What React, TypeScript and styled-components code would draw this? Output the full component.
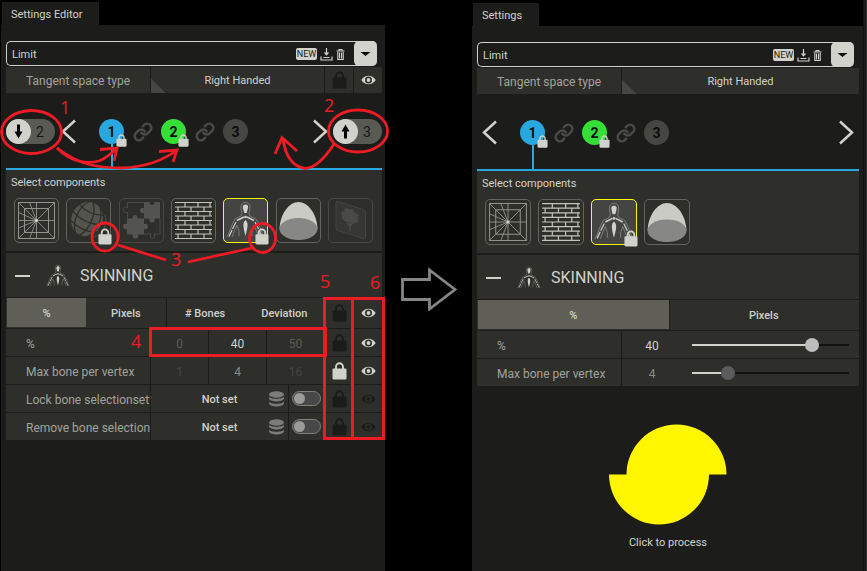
import React, { useId, useState } from "react";
import styled, { createGlobalStyle, css } from "styled-components";
import { Link as LinkIcon } from "lucide-react";

const color = {
  black: "#000000",
  panel: "#1c1c1a",
  cell: "#2e2e2a",
  active: "#5f5f58",
  light: "#d2d2cc",
  label: "#a3a39d",
  blue: "#29a8df",
  green: "#35df38",
  yellow: "#fff600",
  red: "#ed1c24",
};

const GlobalStyle = createGlobalStyle`
  *, *::before, *::after { box-sizing: border-box; }
  body { margin: 0; background: ${color.black}; }
  button, input, select { font: inherit; color: inherit; margin: 0; padding: 0; border: 0; background: none; border-radius: 0; min-width: 0; }
  svg { display: block; }
`;

const Page = styled.main`
  position: relative;
  display: flex;
  min-height: 100vh;
  padding-left: 1px;
  background: ${color.black};
  color: ${color.light};
  font: 12px/16px Roboto, sans-serif;
`;

const Window = styled.section<{ $grow: number; $top: number }>`
  flex: ${(p) => p.$grow} 1 0;
  min-width: 0;
  display: flex;
  flex-direction: column;
  padding-top: ${(p) => p.$top}px;
`;

const WindowTab = styled.h1`
  align-self: flex-start;
  margin: 0 0 0 1px;
  padding: 0 17px 0 9px;
  height: 23px;
  background: ${color.panel};
  font-size: 11px;
  font-weight: 400;
  line-height: 25px;
`;

const WindowBody = styled.div<{ $end: number }>`
  flex: 1;
  padding: 16px ${(p) => p.$end}px 0 5px;
  background: ${color.panel};
`;

const Between = styled.div`
  flex: 0 0 87px;
  display: flex;
  justify-content: center;
  padding-top: 267px;
`;

const WindowEdge = styled.div`
  flex: 0 0 4px;
  border-left: 1px solid #111;
  border-right: 1px solid #333;
  background: #1a1a1a;
`;

const Combo = styled.div`
  display: flex;
  align-items: center;
  height: 25px;
  margin: 0 5px 1px 0;
  padding-left: 5px;
  border: 1px solid ${color.light};
  border-right: 0;
  border-radius: 5px;
`;

const ComboSelect = styled.select`
  flex: 1;
  appearance: none;
  padding-top: 2px;
  font-size: 11px;
`;

const IconButton = styled.button`
  flex: none;
  display: grid;
  place-items: center;
  cursor: pointer;
`;

const NewButton = styled.button`
  width: 21px;
  height: 12px;
  margin: 1px 3px 0 0;
  border-radius: 2px;
  background: ${color.light};
  color: ${color.panel};
  font-size: 9px;
  line-height: 13px;
`;

const ToolButton = styled(IconButton)`
  margin-top: 1px;
`;

const DropButton = styled(IconButton)`
  width: 23px;
  height: 25px;
  margin-left: 6px;
  border-radius: 5px;
  background: ${color.light};
`;

const Row = styled.div<{ $columns: string; $height?: number }>`
  display: grid;
  grid-template-columns: ${(p) => p.$columns};
  gap: 1px;
  height: ${(p) => p.$height ?? 27}px;
  margin-bottom: 1px;
`;

const Cell = styled.div`
  min-width: 0;
  display: flex;
  align-items: center;
  justify-content: center;
  background: ${color.cell};
`;

const RowLabel = styled.label`
  min-width: 0;
  display: flex;
  align-items: center;
  padding: 2px 0 0 20px;
  overflow: hidden;
  white-space: nowrap;
  background: ${color.cell};
  color: ${color.label};
`;

const CenteredSelect = styled.select`
  width: 100%;
  height: 100%;
  padding-top: 2px;
  appearance: none;
  font-size: 11px;
  text-align-last: center;
`;

const CornerCell = styled(Cell)`
  background: linear-gradient(45deg, #464642 10px, transparent 10px) ${color.cell};
`;

const NumberInput = styled.input<{ $tone: string }>`
  width: 100%;
  padding-top: 2px;
  text-align: center;
  color: ${(p) => p.$tone};
`;

const Timeline = styled.div<{ $pills?: boolean }>`
  display: flex;
  align-items: flex-start;
  height: 76px;
  padding: ${(p) => (p.$pills ? "25px 0 0" : "25px 5px 0")};
  border-bottom: 2px solid ${color.blue};
`;

const Pill = styled.button`
  display: flex;
  align-items: center;
  width: 49px;
  height: 25px;
  border-radius: 13px;
  background: #5a5a54;
  color: #161614;
  font-size: 14px;
`;

const PillKnob = styled.span`
  display: grid;
  place-items: center;
  width: 25px;
  height: 25px;
  margin-right: 5px;
  border-radius: 50%;
  background: ${color.light};
`;

const ArrowButton = styled(IconButton)<{ $before?: number; $after?: number }>`
  height: 25px;
  margin: 0 ${(p) => p.$after ?? 0}px 0 ${(p) => p.$before ?? 0}px;
`;

const Steps = styled.ol`
  flex: 1;
  display: flex;
  align-items: flex-start;
  margin: 0;
  padding: 0;
  list-style: none;
`;

const Step = styled.li<{ $tone: string; $stem?: boolean }>`
  position: relative;
  & > button {
    display: block;
    width: 25px;
    height: 25px;
    border-radius: 50%;
    background: ${(p) => p.$tone};
    color: #0c0c0b;
    font-size: 14px;
    font-weight: 700;
  }
  ${(p) =>
    p.$stem &&
    css`
      &::after {
        content: "";
        display: block;
        width: 2px;
        height: 25px;
        margin-left: 12px;
        background: ${color.blue};
      }
    `}
`;

const StepLink = styled.li`
  display: grid;
  place-items: center;
  width: 37px;
  height: 25px;
  color: #4a4a47;
`;

const Badge = styled.span<{ $right: number; $bottom?: number; $top?: number }>`
  position: absolute;
  right: ${(p) => p.$right}px;
  ${(p) => (p.$top !== undefined ? `top: ${p.$top}px;` : `bottom: ${p.$bottom}px;`)}
  pointer-events: none;
`;

const Components = styled.section`
  margin-bottom: 2px;
  padding: 5px 9px 8px 8px;
  background: ${color.cell};
`;

const SmallTitle = styled.h2`
  margin: 0 0 7px -3px;
  font-size: 11px;
  font-weight: 400;
  line-height: 16px;
`;

const Tiles = styled.div<{ $spread?: boolean }>`
  display: flex;
  gap: 7px;
  justify-content: ${(p) => (p.$spread ? "space-between" : "flex-start")};
`;

const Tile = styled.button<{ $size: number; $on?: boolean; $dim?: boolean }>`
  position: relative;
  display: block;
  width: ${(p) => p.$size}px;
  height: ${(p) => p.$size}px;
  border: 1px solid ${(p) => (p.$on ? color.yellow : p.$dim ? "#484844" : "#64645f")};
  border-radius: 5px;
  background: ${(p) => (p.$on ? "#444442" : "transparent")};
`;

const SectionHead = styled.button`
  display: flex;
  align-items: center;
  width: 100%;
  height: 44px;
  margin-bottom: 1px;
  padding: 1px 0 0 9px;
  background: ${color.cell};
  font-size: 16px;
  line-height: 20px;
`;

const Minus = styled.span`
  width: 15px;
  height: 2px;
  margin-right: 15px;
  background: ${color.light};
`;

const HeadIcon = styled.span`
  margin-right: 9px;
`;

const TabStrip = styled.div`
  display: grid;
  grid-auto-flow: column;
  grid-auto-columns: 1fr;
  padding: 0 0 1px 1px;
  background: ${color.cell};
  font-size: 11px;
`;

const TabButton = styled.button<{ $line?: boolean }>`
  padding-top: 2px;
  background: ${color.cell};
  box-shadow: ${(p) => (p.$line ? `inset 1px 0 ${color.panel}` : "none")};
  font-weight: 500;
  &[aria-selected="true"] { background: ${color.active}; box-shadow: none; }
`;

const ValueCell = styled(Cell)`
  display: grid;
  grid-template-columns: 1fr auto 1fr;
  & > svg { grid-column: 3; justify-self: end; margin-right: 4px; }
  & > button { grid-column: 2; padding-top: 2px; font-size: 11px; font-weight: 500; }
`;

const Switch = styled.input`
  appearance: none;
  display: flex;
  align-items: center;
  width: 29px;
  height: 15px;
  border: 1px solid #80807d;
  border-radius: 8px;
  background: #484848;
  &::before {
    content: "";
    width: 11px;
    height: 11px;
    margin-left: 1px;
    border-radius: 50%;
    background: #9b9b98;
  }
  &:checked { justify-content: flex-end; }
`;

const SliderCell = styled(Cell)`
  padding-right: 10px;
  & > input[type="text"] { flex: 0 0 60px; width: 60px; margin-right: 10px; }
`;

const Slider = styled.input<{ $fill: number; $thumb: string }>`
  appearance: none;
  flex: 1;
  height: 14px;
  background: linear-gradient(90deg, ${color.light} ${(p) => p.$fill}%, #11110f ${(p) => p.$fill}%)
    center / 100% 2px no-repeat;
  &::-webkit-slider-thumb {
    appearance: none;
    width: 14px;
    height: 14px;
    border-radius: 50%;
    background: ${(p) => p.$thumb};
  }
`;

const Process = styled.button`
  display: flex;
  flex-direction: column;
  align-items: center;
  gap: 10px;
  margin: 38px auto 0;
  font-size: 11px;
`;

const Overlay = styled.svg`
  position: absolute;
  top: 0;
  left: 0;
  pointer-events: none;
  font-family: "Open Sans", sans-serif;
`;

function Lock({ width = 15, fill = color.light }: { width?: number; fill?: string }) {
  return (
    <svg width={width} height={Math.round(width * 1.2)} viewBox="0 0 15 18" aria-hidden="true">
      <path d="M4 8V4.8a3.4 3.4 0 0 1 7 0V8" fill="none" stroke={fill} strokeWidth="1.9" />
      <path d="M1.5 6.5h12q1 0 1 1V16q0 1.500-1.500 1.500H2Q.5 17.500.5 16V7.500q0-1 1-1Z" fill={fill} />
    </svg>
  );
}

function Eye({ fill = color.light }: { fill?: string }) {
  return (
    <svg width="15" height="10" viewBox="0 0 15 10" aria-hidden="true">
      <path d="M.3 5C2.300 2 4.800.7 7.500.7S12.700 2 14.700 5C12.700 8 10.200 9.300 7.500 9.300S2.300 8 .3 5Z" fill={fill} />
      <circle cx="7.5" cy="5" r="2.700" fill={fill} stroke={color.cell} strokeWidth="1.600" />
    </svg>
  );
}

function LockCell({ on }: { on?: boolean }) {
  return (
    <Cell>
      <IconButton aria-label="Lock" aria-pressed={!!on}>
        <Lock fill={on ? color.light : "#1b1b19"} />
      </IconButton>
    </Cell>
  );
}

function EyeCell({ off }: { off?: boolean }) {
  return (
    <Cell>
      <IconButton aria-label="Visible" aria-pressed={!off}>
        <Eye fill={off ? "#1b1b19" : color.light} />
      </IconButton>
    </Cell>
  );
}

function Chevron({ flip }: { flip?: boolean }) {
  return (
    <svg width="15" height="25" viewBox="0 0 15 25" aria-hidden="true">
      <path d={flip ? "M1 1.500 13 12.500 1 23.500" : "M14 1.500 2 12.500 14 23.500"} fill="none" stroke={color.light} strokeWidth="2.500" />
    </svg>
  );
}

function PillArrow({ up }: { up?: boolean }) {
  return (
    <svg width="9" height="15" viewBox="0 0 9 15" aria-hidden="true">
      <path d={up ? "M4.500.500 8.500 7.500H6V14.500H3V7.500H.5Z" : "M4.500 14.500 8.500 7.500H6V.500H3V7.500H.5Z"} fill="#050505" />
    </svg>
  );
}

function Disks() {
  return (
    <svg width="15" height="16" viewBox="0 0 15 16" fill="#7b7b78" aria-hidden="true">
      <ellipse cx="7.500" cy="3.500" rx="7.500" ry="3.200" />
      <path d="M0 5.500c1 3 14 3 15 0v2c-1 4-14 4-15 0Z" />
      <path d="M0 10.500c1 3 14 3 15 0v1.700c-1 4.300-14 4.300-15 0Z" />
    </svg>
  );
}

function WebDrawing() {
  return (
    <g fill="none" stroke="#92928d" strokeWidth="1">
      <path d="M4.500 4.500h36v36h-36ZM10.500 10.500h24v24h-24Z" />
      <path d="M22.500 4.500v36M4.500 22.500h36M4.500 4.500l36 36M40.500 4.500l-36 36" strokeWidth=".9" />
      <path d="M22.500 22.500 15.500 4.500M22.500 22.500 4.500 14.500M22.500 22.500 4.500 30M22.500 22.500 15.500 40.500" strokeWidth=".9" />
      <circle cx="22.500" cy="22.500" r="1.500" fill={color.light} stroke="none" />
    </g>
  );
}

function GlobeDrawing() {
  return (
    <g>
      <path d="M39 17c3 8-2 20-12 22" fill="none" stroke="#4b4b47" />
      <g transform="rotate(25 21 21)">
        <ellipse cx="21" cy="21" rx="15.500" ry="17.500" fill="#54544f" />
        <g fill="none" stroke={color.cell} strokeWidth="1.300">
          <path d="M17 3c-9 9-9 27 0 36M19 3c9 9 9 27 2 36M28 5c8 9 7 24 1 32" />
          <path d="M8 11q13 6 26 0M5 20q16 7 32 0M7 29q14 6 28 0" />
        </g>
      </g>
    </g>
  );
}

function PuzzleDrawing() {
  return (
    <g strokeWidth="1">
      <path
        fill="none"
        stroke="#494945"
        d="M8.500 4.500H25M8.500 4.500V10q-4-2-4 2t4 2v6.500M41 20.500v15.500h-6q2 4.500-1.500 4.500T32 36h-7"
      />
      <path
        fill="#53534f"
        d="M25 4h5.500q-.5 3 2.500 3t2.500-3H41v16.500h-5.500q1 4-2.500 4t-2.500-4H25V15q-4 1-4-2.500T25 10Z"
      />
      <path
        fill="#53534f"
        d="M8 20.500h5.500q-.5-3.500 2.500-3.500t2.500 3.500H25V26q4-1 4 2.500T25 31v5.500h-6q1 4-2.500 4t-2.500-4H8V31q-4 1-4-2.500T8 26Z"
      />
    </g>
  );
}

function BricksDrawing() {
  const courses = [0, 1, 2, 3, 4, 5, 6, 7];
  return (
    <g stroke="#c4c4be" strokeWidth="1.200" fill="none">
      {courses.map((course) => {
        const top = 4.5 + course * 4.5;
        const joints = course % 2 ? [7, 20, 33] : [14, 27, 39];
        return (
          <React.Fragment key={course}>
            <path d={`M4 ${top}H41`} />
            {joints.map((x) => (
              <path key={x} d={`M${x} ${top}V${top + 4.5}`} />
            ))}
          </React.Fragment>
        );
      })}
      <path d="M4 40.500H41" />
    </g>
  );
}

function FigureDrawing() {
  return (
    <g fill="none" stroke="#898985" strokeWidth=".8">
      <path d="M19 15.500C17 8 18 4.500 22.500 4.500S28 8 26 15.500L27 18l6 3c3 5 5 12 8 18M19 15.500 18 18l-6 3C9 26 7 33 4 39" />
      <path d="M14 27c-2 4-3 8-5 12M31 27c2 4 3 8 5 12M14 27l2 6v5M31 27l-2 6v5" />
      <path d="M22.500 6.500c-4 0-2.500 4-1.200 8.500h2.400c1.300-4.500 2.800-8.500-1.200-8.500Z" fill={color.light} stroke="none" />
      <path d="M22.500 22c-3.500 3-2 8 0 16 2-8 3.500-13 0-16Z" fill={color.light} stroke="none" />
      <path d="M21 19 14 22.500M24 19l7 3.500" stroke={color.light} strokeWidth="1.500" />
      <path d="M13 24 9.500 31M32 24l3.500 7M9 32 6 38.500M36 32l3 6.500" stroke={color.light} strokeWidth="1.200" />
      <circle cx="22.500" cy="19" r="1.300" fill={color.light} stroke="none" />
    </g>
  );
}

function DomeDrawing() {
  return (
    <g>
      <path d="M3.500 31C4 16 13 4 22.500 4S41 16 41.500 31Z" fill="#cbcbc5" />
      <ellipse cx="22.500" cy="31" rx="19" ry="11" fill="#878785" />
    </g>
  );
}

function TreeDrawing() {
  return (
    <g>
      <path d="M8 4.500Q8 3 10 3.500L35 11.500Q37.500 12.500 37.500 15V39Q37.500 41.500 35 40.500L10 32.500Q8 32 8 30Z" fill="#363633" stroke="#454542" />
      <path d="M14 18q-2-4 2-5 0-4 5-2 4-1 5 3 6 2 4 6 2 5-3 5-4 2-6-1-5 0-5-2-3-1-2-4Z" fill="#4a4a47" />
      <path d="M22 23v10M22 28l-3-3M22 28l3-3" stroke="#4a4a47" strokeWidth="1.500" fill="none" />
    </g>
  );
}

const drawings = {
  web: WebDrawing,
  globe: GlobeDrawing,
  puzzle: PuzzleDrawing,
  bricks: BricksDrawing,
  figure: FigureDrawing,
  dome: DomeDrawing,
  tree: TreeDrawing,
};
type DrawingName = keyof typeof drawings;

function Drawing({ name, size }: { name: DrawingName; size: number }) {
  const Shape = drawings[name];
  return (
    <svg width={size} height={size} viewBox="1 1 43 43" aria-hidden="true">
      <Shape />
    </svg>
  );
}

interface TileData {
  name: DrawingName;
  on?: boolean;
  dim?: boolean;
  locked?: boolean;
}

function ComponentPicker({ tiles, size, spread }: { tiles: TileData[]; size: number; spread?: boolean }) {
  return (
    <Components>
      <SmallTitle>Select components</SmallTitle>
      <Tiles $spread={spread}>
        {tiles.map((t) => (
          <Tile key={t.name} $size={size} $on={t.on} $dim={t.dim} aria-label={t.name} aria-pressed={!!t.on}>
            <Drawing name={t.name} size={size - 2} />
            {t.locked && (
              <Badge $right={-2} $bottom={-3}>
                <Lock width={14} />
              </Badge>
            )}
          </Tile>
        ))}
      </Tiles>
    </Components>
  );
}

function PresetBar() {
  return (
    <Combo>
      <ComboSelect aria-label="Preset">
        <option>Limit</option>
      </ComboSelect>
      <NewButton>NEW</NewButton>
      <ToolButton aria-label="Save preset">
        <svg width="13" height="13" viewBox="0 0 13 13" aria-hidden="true">
          <path d="M6.500 0v7M1 8.500V12h11V8.500M3.500 9.500h6" fill="none" stroke={color.light} strokeWidth="1.200" />
          <path d="M3.800 4.500 6.500 7.800 9.200 4.500Z" fill={color.light} />
        </svg>
      </ToolButton>
      <ToolButton aria-label="Delete preset">
        <svg width="15" height="13" viewBox="0 0 15 13" aria-hidden="true">
          <path d="M3.500 3h8M6 2.500V1.500h3v1M4.800 4v7.500h5.400V4M6.500 4.500v6M8.500 4.500v6" fill="none" stroke={color.light} strokeWidth="1.100" />
        </svg>
      </ToolButton>
      <DropButton aria-label="Show presets">
        <svg width="11" height="6" viewBox="0 0 11 6" aria-hidden="true">
          <path d="M.5 1h10L5.500 5Z" fill="#050505" />
        </svg>
      </DropButton>
    </Combo>
  );
}

function TangentRow({ editor }: { editor?: boolean }) {
  const id = useId();
  return (
    <Row $height={26} $columns={editor ? "144fr 173fr 28px 28px" : "144fr 237fr"}>
      <RowLabel htmlFor={id}>Tangent space type</RowLabel>
      <CornerCell>
        <CenteredSelect id={id}>
          <option>Right Handed</option>
        </CenteredSelect>
      </CornerCell>
      {editor && <LockCell />}
      {editor && <EyeCell />}
    </Row>
  );
}

function StepList() {
  return (
    <Steps>
      <Step $tone={color.blue} $stem>
        <button>1</button>
        <Badge $right={-3} $top={15}>
          <Lock width={11} />
        </Badge>
      </Step>
      <StepLink>
        <LinkIcon size={20} strokeWidth={3} />
      </StepLink>
      <Step $tone={color.green}>
        <button>2</button>
        <Badge $right={-3} $top={15}>
          <Lock width={11} />
        </Badge>
      </Step>
      <StepLink>
        <LinkIcon size={20} strokeWidth={3} />
      </StepLink>
      <Step $tone="#464643">
        <button>3</button>
      </Step>
    </Steps>
  );
}

function SkinningHead() {
  return (
    <SectionHead aria-expanded="true">
      <Minus />
      <HeadIcon>
        <Drawing name="figure" size={26} />
      </HeadIcon>
      SKINNING
    </SectionHead>
  );
}

function UnitTabs({ names, lineAt }: { names: string[]; lineAt: number }) {
  const [active, setActive] = useState(names[0]);
  return (
    <TabStrip role="tablist">
      {names.map((n, i) => (
        <TabButton key={n} role="tab" $line={i === lineAt} aria-selected={n === active} onClick={() => setActive(n)}>
          {n}
        </TabButton>
      ))}
    </TabStrip>
  );
}

interface RangeRowProps {
  label: string;
  values: [string, string, string];
  tone: string;
  locked?: boolean;
}

function RangeRow({ label, values, tone, locked }: RangeRowProps) {
  const id = useId();
  const edge = locked ? "#454541" : "#5b5b57";
  return (
    <Row $columns="144fr 57fr 57fr 57fr 28px 28px">
      <RowLabel htmlFor={id}>{label}</RowLabel>
      <Cell>
        <NumberInput aria-label={`${label} minimum`} defaultValue={values[0]} $tone={edge} />
      </Cell>
      <Cell>
        <NumberInput id={id} defaultValue={values[1]} $tone={tone} />
      </Cell>
      <Cell>
        <NumberInput aria-label={`${label} maximum`} defaultValue={values[2]} $tone={edge} />
      </Cell>
      <LockCell on={locked} />
      <EyeCell />
    </Row>
  );
}

function SetRow({ label }: { label: string }) {
  const id = useId();
  return (
    <Row $columns="144fr 137fr 35fr 28px 28px">
      <RowLabel htmlFor={id}>{label}</RowLabel>
      <ValueCell>
        <button>Not set</button>
        <Disks />
      </ValueCell>
      <Cell>
        <Switch id={id} type="checkbox" />
      </Cell>
      <LockCell />
      <EyeCell off />
    </Row>
  );
}

interface SliderRowProps {
  label: string;
  value: string;
  tone: string;
  thumb: string;
  position: number;
}

function SliderRow({ label, value, tone, thumb, position }: SliderRowProps) {
  const id = useId();
  const [at, setAt] = useState(position);
  return (
    <Row $columns="144fr 237fr">
      <RowLabel htmlFor={id}>{label}</RowLabel>
      <SliderCell>
        <NumberInput type="text" aria-label={`${label} value`} defaultValue={value} $tone={tone} />
        <Slider
          id={id}
          type="range"
          value={at}
          onChange={(e) => setAt(Number(e.target.value))}
          $fill={at}
          $thumb={thumb}
        />
      </SliderCell>
    </Row>
  );
}

function Annotations() {
  return (
    <Overlay width="390" height="571" viewBox="0 0 390 571" fill="none" stroke={color.red} strokeWidth="2.800" aria-hidden="true">
      <ellipse cx="31.500" cy="132" rx="30" ry="21.500" />
      <ellipse cx="358" cy="131" rx="29.500" ry="21" />
      <ellipse cx="105" cy="237" rx="13" ry="14" />
      <ellipse cx="262.500" cy="238" rx="13" ry="14.500" />
      <path d="M57 148C72 163 88 164 99 161 107 158 112 153 117 148M100 149.500 117 148 114 161" />
      <path d="M57 148C78 164 96 168 122 168 146 167 164 160 177 150M159 151.500 177 150 173 162" />
      <path d="M334 144C325 158 315 168 305 168.500 293 167 285 156 283 138M275 154 282 137.500 297 151" />
      <path d="M118 245 166 260M188 262 252 248" />
      <g strokeWidth="3">
        <path d="M150.500 328.500h175v27h-175Z" />
        <path d="M324.500 298.500h59v140h-59ZM352.500 298.500v140" />
      </g>
      <g fill={color.red} stroke="none" fontSize="18">
        <text x="60" y="114">1</text>
        <text x="324" y="112">2</text>
        <text x="171" y="266">3</text>
        <text x="131" y="348">4</text>
        <text x="320" y="288">5</text>
        <text x="370" y="289">6</text>
      </g>
    </Overlay>
  );
}

const editorTiles: TileData[] = [
  { name: "web" },
  { name: "globe", locked: true },
  { name: "puzzle", dim: true },
  { name: "bricks" },
  { name: "figure", on: true, locked: true },
  { name: "dome" },
  { name: "tree", dim: true },
];

const settingsTiles: TileData[] = [
  { name: "web" },
  { name: "bricks" },
  { name: "figure", on: true, locked: true },
  { name: "dome" },
];

export default function App() {
  return (
    <>
      <GlobalStyle />
      <Page>
        <Window $grow={384} $top={2}>
          <WindowTab>Settings Editor</WindowTab>
          <WindowBody $end={3}>
            <PresetBar />
            <TangentRow editor />
            <Timeline $pills>
              <Pill aria-label="Minimum 2">
                <PillKnob>
                  <PillArrow />
                </PillKnob>
                2
              </Pill>
              <ArrowButton aria-label="Previous" $before={6} $after={23}>
                <Chevron />
              </ArrowButton>
              <StepList />
              <ArrowButton aria-label="Next" $after={5}>
                <Chevron flip />
              </ArrowButton>
              <Pill aria-label="Maximum 3">
                <PillKnob>
                  <PillArrow up />
                </PillKnob>
                3
              </Pill>
            </Timeline>
            <ComponentPicker tiles={editorTiles} size={45} spread />
            <SkinningHead />
            <Row $height={30} $columns="1fr 28px 28px">
              <UnitTabs names={["%", "Pixels", "# Bones", "Deviation"]} lineAt={2} />
              <LockCell />
              <EyeCell />
            </Row>
            <RangeRow label="%" values={["0", "40", "50"]} tone={color.light} />
            <RangeRow label="Max bone per vertex" values={["1", "4", "16"]} tone="#8a8a85" locked />
            <SetRow label="Lock bone selectionset" />
            <SetRow label="Remove bone selection" />
          </WindowBody>
        </Window>
        <Between>
          <svg width="58" height="44" viewBox="0 0 58 44" aria-label="becomes" role="img">
            <path d="M2.500 12.500H29.500V3L55 22.500 29.500 42V32.500H2.500Z" fill="none" stroke="#858585" strokeWidth="2.800" />
          </svg>
        </Between>
        <Window $grow={391} $top={3}>
          <WindowTab>Settings</WindowTab>
          <WindowBody $end={4}>
            <PresetBar />
            <TangentRow />
            <Timeline>
              <ArrowButton aria-label="Previous" $after={23}>
                <Chevron />
              </ArrowButton>
              <StepList />
              <ArrowButton aria-label="Next">
                <Chevron flip />
              </ArrowButton>
            </Timeline>
            <ComponentPicker tiles={settingsTiles} size={46} />
            <SkinningHead />
            <Row $height={30} $columns="1fr">
              <UnitTabs names={["%", "Pixels"]} lineAt={1} />
            </Row>
            <SliderRow label="%" value="40" tone={color.light} thumb="#bdbdbd" position={79} />
            <SliderRow label="Max bone per vertex" value="4" tone="#8a8a85" thumb="#5c5c5c" position={20} />
            <Process>
              <svg width="118" height="101" viewBox="0 0 118 101" aria-hidden="true">
                <path d="M0 50.500H17.500A50 50 0 0 1 117.500 50.500H100A50 50 0 0 1 0 50.500Z" fill={color.yellow} />
              </svg>
              Click to process
            </Process>
          </WindowBody>
        </Window>
        <WindowEdge />
        <Annotations />
      </Page>
    </>
  );
}
